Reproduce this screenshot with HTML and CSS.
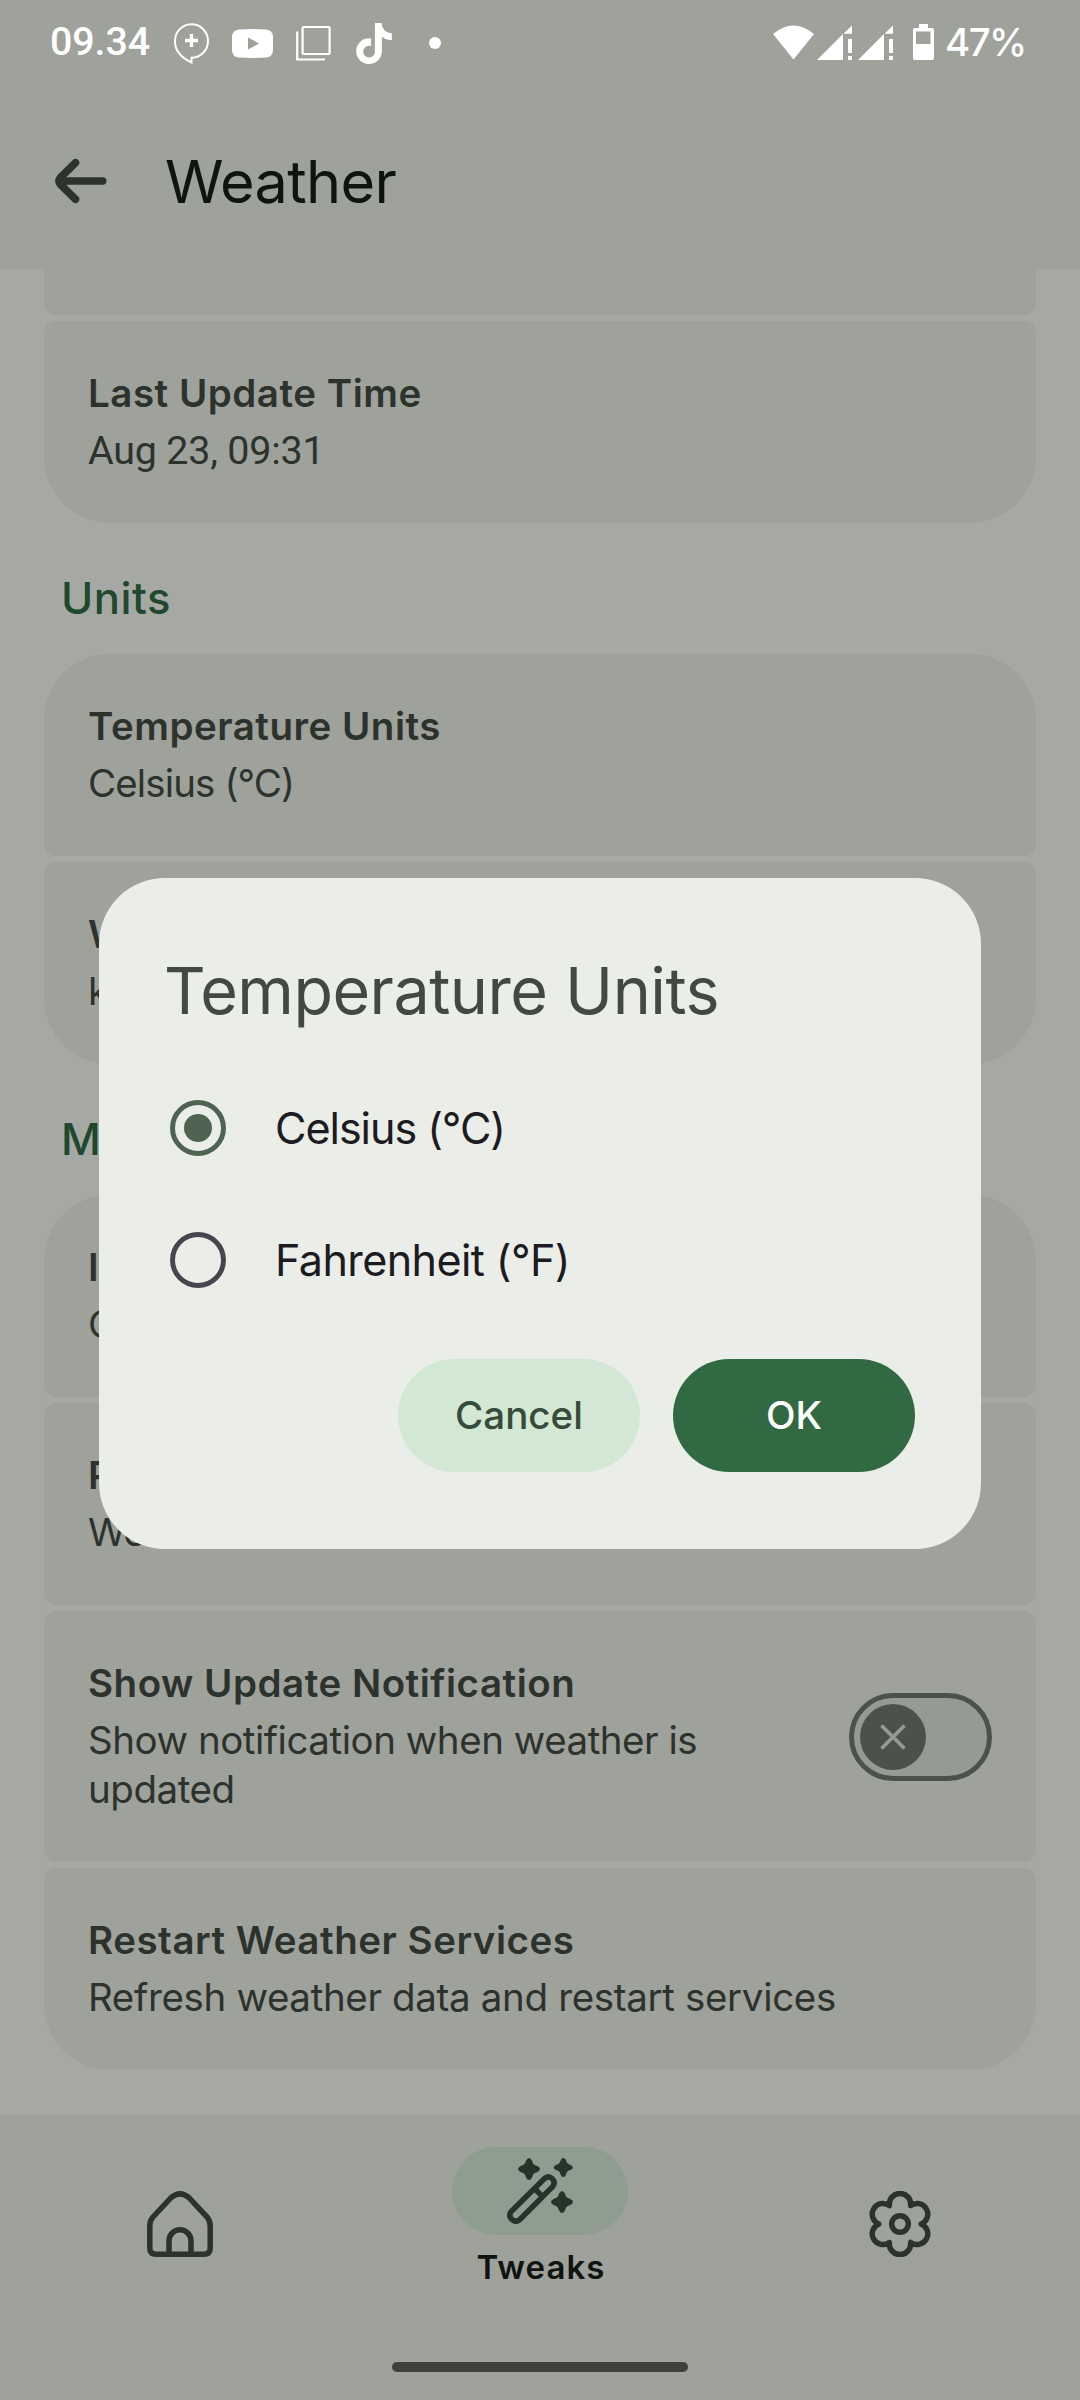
FILE: index.html
```
<!DOCTYPE html>
<html lang="en">
<head>
<meta charset="utf-8">
<title>Weather</title>
<link rel="stylesheet" href="styles.css">
</head>
<body>
<div class="screen">
  <header class="top">
    <div class="status">
      <span class="clock">09.34</span>
      <svg class="slot" viewBox="161 0 61 84" fill="none" stroke="#fff" stroke-width="2"><path d="M191.500 57.800V62.500C182 58 175 51 175 41.500A16.500 16.800 0 1 1 191.500 57.800Z"/><path d="M191.500 34v13M185 40.500h13" stroke-width="3.400"/></svg>
      <svg class="slot" viewBox="222 0 61 84"><path fill="#fff" fill-rule="evenodd" d="M239 29.500Q252.500 28.500 266 29.500 272.500 30 273 36.500V50.500Q272.500 57 266 57.600 252.500 58.500 239 57.600 232.500 57 232 50.500V36.500Q232.500 30 239 29.500ZM248 37.500V49.500L259 43.500Z"/></svg>
      <svg class="slot" viewBox="283 0 61 84" fill="none" stroke="#fff" stroke-width="2.200"><rect x="302.600" y="27" width="27" height="27" rx="1"/><path d="M297.200 31.500V59.500H325"/></svg>
      <svg class="slot" viewBox="344 0 61 84"><path fill="#fff" transform="translate(353.500 23) scale(1.71)" d="M12.525.02c1.310-.02 2.610-.01 3.910-.02.08 1.530.63 3.090 1.750 4.170 1.120 1.110 2.700 1.620 4.240 1.790v4.030c-1.440-.05-2.890-.35-4.200-.97-.57-.26-1.100-.59-1.620-.93-.01 2.920.01 5.840-.02 8.750-.08 1.400-.54 2.790-1.350 3.940-1.310 1.920-3.580 3.170-5.910 3.210-1.430.08-2.860-.31-4.080-1.030-2.020-1.190-3.440-3.370-3.650-5.710-.02-.5-.03-1-.01-1.490.18-1.900 1.120-3.720 2.580-4.960 1.660-1.440 3.980-2.130 6.150-1.720.02 1.480-.04 2.960-.04 4.440-.99-.32-2.150-.23-3.020.37-.63.41-1.110 1.040-1.360 1.750-.21.51-.15 1.070-.14 1.610.24 1.640 1.820 3.020 3.500 2.870 1.120-.01 2.190-.66 2.770-1.610.19-.33.4-.67.41-1.060.1-1.790.06-3.570.07-5.360.01-4.030-.01-8.050.02-12.070z"/></svg>
      <svg class="slot" viewBox="405 0 61 84"><circle cx="435" cy="43" r="6" fill="#fff"/></svg>
      <svg class="signals" viewBox="772 0 173 84" fill="#fff">
        <path d="M773 34Q793.500 17 814 34L793.500 59.500Z"/>
        <path d="M817 60 843 34V60ZM843.500 33.700 852 25.500V33.700ZM848 39h4v14h-4ZM848 56h4v4h-4Z"/>
        <path d="M858 60 884 34V60ZM884.500 33.700 893 25.500V33.700ZM889 39h4v14h-4ZM889 56h4v4h-4Z"/>
        <path fill-rule="evenodd" d="M919 24h9v4h4q2 0 2 2V58q0 2-2 2H915q-2 0-2-2V30q0-2 2-2h4ZM916 31.500V44H930.500V31.500Z"/>
      </svg>
      <span class="percent">47%</span>
    </div>
    <div class="appbar">
      <svg class="back" viewBox="52 158 58 48" fill="none" stroke="#2b332c" stroke-width="7.600" stroke-linecap="round" stroke-linejoin="round"><path d="M102.700 182H60M75.500 163.700 60.500 178.500Q57.500 182 60.500 185.500L75.500 200.300"/></svg>
      <h1 class="title">Weather</h1>
    </div>
  </header>

  <main class="list">
    <section class="group">
      <div class="card peek"></div>
      <div class="card last"><div class="name">Last Update Time</div><div class="desc digits">Aug 23, 09:31</div></div>
    </section>
    <h2 class="heading">Units</h2>
    <section class="group">
      <div class="card first"><div class="name">Temperature Units</div><div class="desc tight">Celsius (°C)</div></div>
      <div class="card last"><div class="name">Wind Speed Units</div><div class="desc">km/h</div></div>
    </section>
    <h2 class="heading">Misc</h2>
    <section class="group">
      <div class="card first"><div class="name">Icon Pack</div><div class="desc">Outline</div></div>
      <div class="card"><div class="name">Provider</div><div class="desc">Weather</div></div>
      <div class="card with-switch">
        <div class="texts"><div class="name">Show Update Notification</div><div class="desc">Show notification when weather is updated</div></div>
        <div class="switch"><div class="thumb"><svg class="cross" viewBox="0 0 26 26" stroke="#959b94" stroke-width="3.600"><path d="M1.500 1.500 24.500 24.500M24.500 1.500 1.500 24.500"/></svg></div></div>
      </div>
      <div class="card last"><div class="name">Restart Weather Services</div><div class="desc wide">Refresh weather data and restart services</div></div>
    </section>
  </main>

  <nav class="nav">
    <div class="tabs">
      <div class="tab"><svg class="icon" viewBox="147 2191 66 66" fill="none" stroke="#2b332c" stroke-width="5.500"><path d="M149.800 2226Q149.800 2220.500 153 2217L171 2197.700Q180 2190 189 2197.700L207 2217Q210.200 2220.500 210.200 2226V2248Q210.200 2254.200 204 2254.200H156Q149.800 2254.200 149.800 2248Z"/><path d="M169 2254V2241a11 11.300 0 0 1 22 0V2254"/></svg></div>
      <div class="tab active">
        <div class="pill"><svg class="icon" viewBox="507 2158 66 66" fill="none" stroke="#26332a" stroke-width="5.500">
          <path d="M544.300 2178.700Q548.300 2175 552.300 2178.700 556 2182.700 552.300 2187L519.700 2219.600Q515.500 2223 511.700 2219.300 508 2215.500 511.400 2211.300ZM534.500 2188.500 542 2196"/>
          <g fill="#26332a" stroke="none">
            <path transform="translate(529 2169)" d="M-3-8.500Q0-13.500 3-8.500Q3.800-3.800 8.500-3Q13.500 0 8.500 3Q3.800 3.800 3 8.500Q0 13.500-3 8.500Q-3.800 3.800-8.500 3Q-13.500 0-8.500-3Q-3.800-3.800-3-8.500Z"/>
            <path transform="translate(563.300 2167.500) scale(.87)" d="M-3-8.500Q0-13.500 3-8.500Q3.800-3.800 8.500-3Q13.500 0 8.500 3Q3.800 3.800 3 8.500Q0 13.500-3 8.500Q-3.800 3.800-8.500 3Q-13.500 0-8.500-3Q-3.800-3.800-3-8.500Z"/>
            <path transform="translate(562 2202)" d="M-3-8.500Q0-13.500 3-8.500Q3.800-3.800 8.500-3Q13.500 0 8.500 3Q3.800 3.800 3 8.500Q0 13.500-3 8.500Q-3.800 3.800-8.500 3Q-13.500 0-8.500-3Q-3.800-3.800-3-8.500Z"/>
          </g></svg></div>
        <span class="tab-label">Tweaks</span>
      </div>
      <div class="tab"><svg class="icon" viewBox="867 2191 66 66" fill="none" stroke="#2b332c" stroke-width="5.500" stroke-linejoin="round"><path d="M889.400 2205.600A10.700 10.700 0 1 1 910.600 2205.600A10.700 10.700 0 1 1 921.200 2224A10.700 10.700 0 1 1 910.600 2242.400A10.700 10.700 0 1 1 889.400 2242.400A10.700 10.700 0 1 1 878.800 2224A10.700 10.700 0 1 1 889.400 2205.600Z"/><circle cx="900" cy="2224" r="8.300"/></svg></div>
    </div>
    <div class="handle"></div>
  </nav>

  <div class="dialog">
    <h2 class="dialog-title">Temperature Units</h2>
    <div class="option"><span class="radio on"></span><span class="label celsius">Celsius (°C)</span></div>
    <div class="option"><span class="radio"></span><span class="label">Fahrenheit (°F)</span></div>
    <div class="actions"><button class="btn">Cancel</button><button class="btn primary">OK</button></div>
  </div>
</div>
</body>
</html>
```
FILE: styles.css
```
* { box-sizing: border-box; }
body { margin: 0; font-family: Inter, "Liberation Sans", sans-serif; }
h1, h2 { margin: 0; font-weight: 400; }
svg { display: block; flex: none; }

.screen {
  position: relative;
  display: flex;
  flex-direction: column;
  width: 1080px;
  height: 2400px;
  overflow: hidden;
  background: #a6a9a3;
  color: #2b332c;
}

.top { flex: none; height: 270px; background: #9fa19b; }
.status { display: flex; align-items: center; height: 84px; padding: 0 0 0 50px; color: #fff; line-height: 84px; }
.clock { width: 111px; font: 500 39.4px/84px Roboto, sans-serif; letter-spacing: -.1px; }
.slot { width: 61px; height: 84px; }
.signals { width: 173px; height: 84px; margin-left: auto; }
.percent { width: 135px; font-size: 38.5px; font-weight: 500; letter-spacing: -1.6px; }
.appbar { display: flex; align-items: center; gap: 55px; height: 186px; padding: 7px 52px 0; }
.back { width: 58px; height: 48px; }
.title { font-size: 59.4px; line-height: 80px; letter-spacing: -.61px; color: #0f1410; }

.list { flex: none; height: 1844px; padding: 0 44px; }
.group { display: flex; flex-direction: column; gap: 6px; }
.card { min-height: 202px; padding: 45px 44px 48px; border-radius: 12px; background: #9fa19b; }
.card.peek { min-height: 45px; padding: 0; border-radius: 0 0 12px 12px; }
.card.first { border-radius: 66px 66px 12px 12px; }
.card.last { border-radius: 12px 12px 66px 66px; }
.name { font-size: 38.5px; font-weight: 600; line-height: 54px; letter-spacing: .52px; }
.desc { margin-top: 6px; font-size: 38.5px; line-height: 49px; letter-spacing: -.46px; }
.desc.tight { letter-spacing: -.88px; }
.desc.wide { letter-spacing: -.34px; }
.desc.digits { font-family: Roboto, sans-serif; font-size: 39.4px; letter-spacing: -.2px; }
.with-switch { display: flex; align-items: center; justify-content: space-between; }
.texts { width: 650px; }
.heading { height: 131px; padding: 20px 0 0 17px; font-size: 43.6px; font-weight: 500; line-height: 112px; letter-spacing: .5px; color: #20482e; }

.switch { display: flex; align-items: center; width: 143px; height: 88px; margin-top: 3px; padding-left: 5.5px; border: 5.5px solid #4c514a; border-radius: 44px; background: #959b94; }
.thumb { display: flex; align-items: center; justify-content: center; width: 66px; height: 66px; border-radius: 50%; background: #4c514a; }
.cross { width: 26px; height: 26px; }

.nav { display: flex; flex-direction: column; flex: none; height: 286px; padding-bottom: 28px; background: #9fa19b; }
.tabs { display: grid; grid-template-columns: repeat(3, 1fr); }
.tab { display: flex; flex-direction: column; align-items: center; padding-top: 77px; }
.tab.active { padding-top: 33px; }
.icon { width: 66px; height: 66px; }
.pill { display: flex; justify-content: center; width: 176px; height: 88px; padding-top: 11px; border-radius: 44px; background: #8e9d8f; }
.tab-label { margin-top: 12px; padding-left: 2px; font-size: 33px; font-weight: 600; line-height: 40px; letter-spacing: 1.1px; color: #0f1410; }
.handle { width: 296px; height: 10px; margin: auto auto 0; border-radius: 5px; background: #3f3f3d; }

.dialog {
  position: absolute;
  top: 878px;
  left: 99px;
  width: 882px;
  height: 671px;
  padding: 73px 66px 77px 65px;
  border-radius: 66px;
  background: #ebeee8;
}
.dialog-title { margin-bottom: 31px; font-size: 64.6px; line-height: 80px; letter-spacing: -.5px; color: #424940; }
.option { display: flex; align-items: center; gap: 49px; height: 132px; padding-left: 6px; }
.radio { display: grid; place-items: center; width: 56px; height: 56px; border: 5.5px solid #48454e; border-radius: 50%; }
.radio.on { border-color: #4f6352; }
.radio.on::after { content: ""; width: 28px; height: 28px; border-radius: 50%; background: #4f6352; }
.label { padding-bottom: 1px; font-size: 43.1px; line-height: 60px; letter-spacing: -.6px; color: #1c1b1f; }
.label.celsius { letter-spacing: -1.05px; }
.actions { display: flex; justify-content: flex-end; gap: 33px; margin-top: 33px; }
.btn { width: 242px; height: 113px; padding: 0; border: 0; border-radius: 57px; background: #d2e8d4; color: #374b3b; font: 500 38.5px/113px Inter, sans-serif; }
.btn.primary { background: #316a42; color: #fff; }
```
